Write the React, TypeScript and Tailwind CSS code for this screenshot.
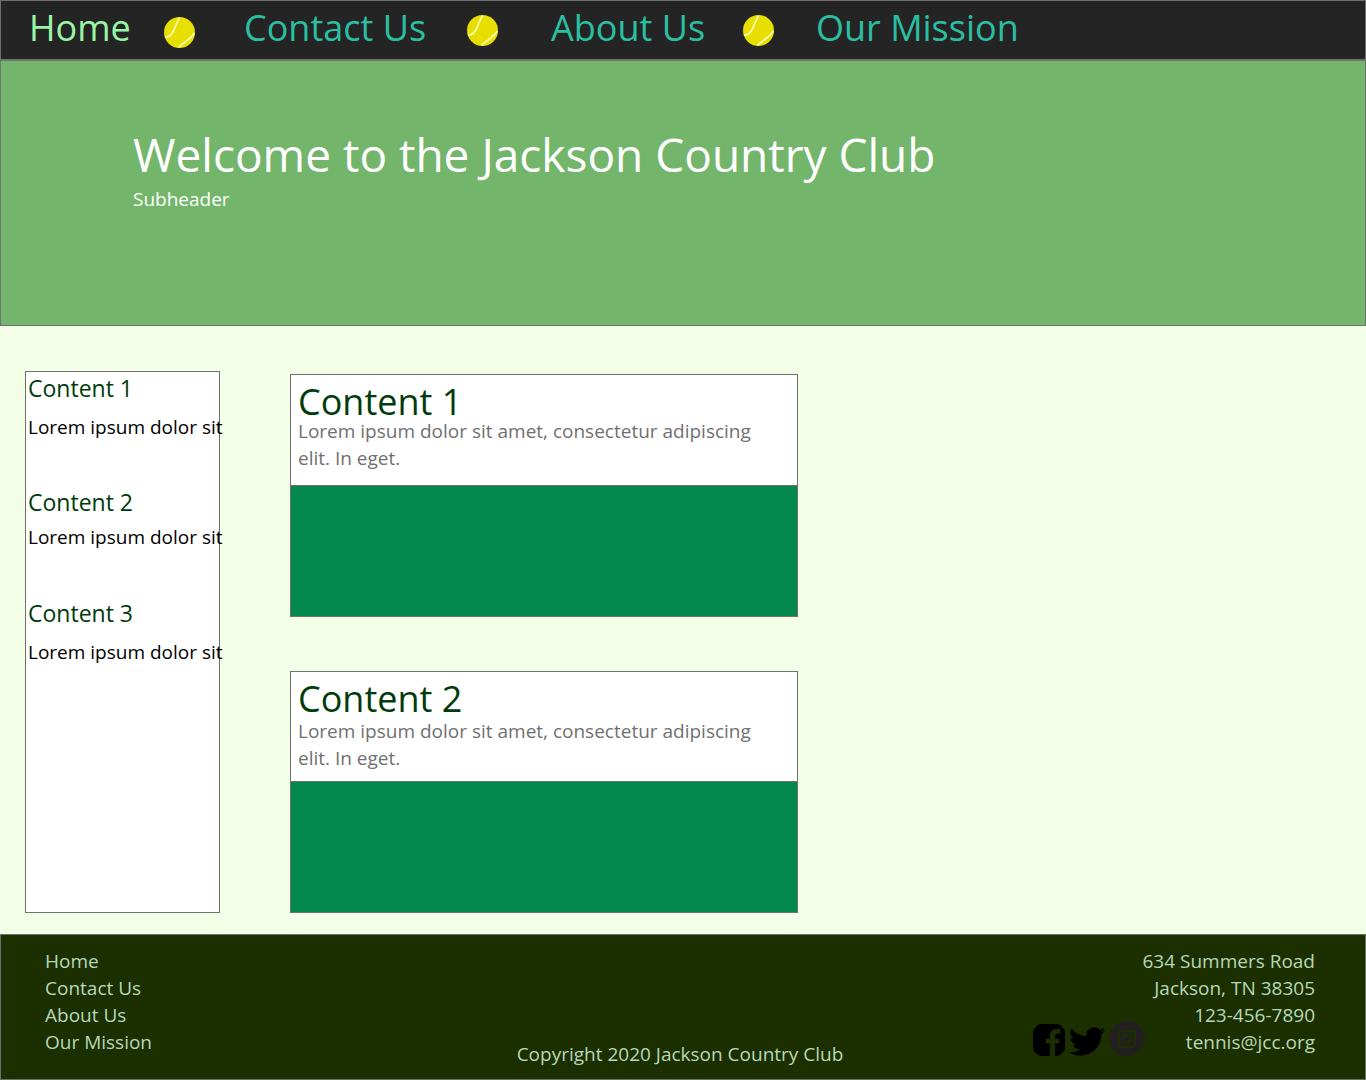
import React from "react";

function TennisBall({ className = "" }: { className?: string }) {
  return (
    <svg viewBox="0 0 31 31" className={`size-[31px] ${className}`} aria-hidden="true">
      <circle cx="15.5" cy="15.5" r="15.5" fill="#e6df00" />
      <path d="M15.6 .8C12.5 5 11.7 10.500 8.500 15.500C6.500 19 4 20.500 1 19.800" fill="none" stroke="#fbf8b0" strokeWidth="1.700" />
      <path d="M14.500 30.300C19 25.500 27 22.500 30.300 16" fill="none" stroke="#fbf8b0" strokeWidth="1.700" />
    </svg>
  );
}

function FacebookIcon() {
  return (
    <svg viewBox="0 0 32 32" className="size-8" aria-hidden="true">
      <path
        fill="#000"
        d="M8 0H24Q27 0 29 3Q32 5 32 8V24Q32 27 29 29Q27 32 24 32H22V19.500H26V15H22V12Q22 9.500 24.500 9.500H27V5H23Q17 5 17 11.500V15H13V19.500H17V32H8Q5 32 3 29Q0 27 0 24V8Q0 5 3 3Q5 0 8 0Z"
      />
    </svg>
  );
}

function TwitterIcon() {
  return (
    <svg viewBox="0 2 24 20" preserveAspectRatio="none" className="h-[29px] w-9" aria-hidden="true">
      <path
        fill="#000"
        d="M23.953 4.570a10 10 0 01-2.825.775 4.958 4.958 0 002.163-2.723c-.951.555-2.005.959-3.127 1.184a4.920 4.920 0 00-8.384 4.482C7.690 8.095 4.067 6.130 1.640 3.162a4.822 4.822 0 00-.666 2.475c0 1.710.870 3.213 2.188 4.096a4.904 4.904 0 01-2.228-.616v.060a4.923 4.923 0 003.946 4.827 4.996 4.996 0 01-2.212.085 4.936 4.936 0 004.604 3.417 9.867 9.867 0 01-6.102 2.105c-.390 0-.779-.023-1.170-.067a13.995 13.995 0 007.557 2.209c9.053 0 13.998-7.496 13.998-13.985 0-.210 0-.420-.015-.630A9.935 9.935 0 0024 4.590z"
      />
    </svg>
  );
}

function InstagramIcon() {
  return (
    <svg viewBox="0 0 36 36" className="size-9" aria-hidden="true">
      <circle cx="18" cy="18.500" r="17.500" fill="#231f20" />
      <rect x="10" y="11" width="16" height="16" rx="1.500" fill="none" stroke="#1b2f00" strokeWidth="2" />
      <circle cx="18" cy="19" r="4" fill="none" stroke="#1b2f00" strokeWidth="2.200" />
      <path d="M10 18H13.500M22.500 18H26" stroke="#1b2f00" strokeWidth="1.200" />
      <rect x="21.500" y="12.500" width="3" height="3" fill="#1b2f00" />
    </svg>
  );
}

const sidebar = [
  { title: "Content 1", row: "h-[114px]", gap: "pt-2.5" },
  { title: "Content 2", row: "h-[111px]", gap: "pt-1.5" },
  { title: "Content 3", row: "", gap: "pt-2.5" },
];

const cards = [
  { title: "Content 1", head: "h-[111px] pt-[11px]", heading: "leading-[32px]" },
  { title: "Content 2", head: "h-[110px] pt-2", heading: "leading-[38px]" },
];

export default function App() {
  return (
    <div className="flex min-h-screen flex-col bg-[#f2ffe6] font-['Open_Sans',sans-serif] text-[19px] leading-[27px]">
      <header className="border border-[#707070] bg-[#242424]">
        <nav aria-label="Main" className="grid h-[58px] grid-cols-[135px_80px_223px_84px_192px_73px_auto] pl-7 text-4xl leading-[54px] whitespace-nowrap text-[#2bbfa2]">
          <a href="#home" className="text-[#98f5a4]">Home</a>
          <TennisBall className="mt-4" />
          <a href="#contact">Contact Us</a>
          <TennisBall className="mt-3.5" />
          <a href="#about">About Us</a>
          <TennisBall className="mt-3.5" />
          <a href="#mission">Our Mission</a>
        </nav>
      </header>

      <section className="h-[266px] border border-[#707070] bg-[#73b66b] pt-[62px] pl-[132px] text-white">
        <h1 className="text-[46px] leading-[63px]">Welcome to the Jackson Country Club</h1>
        <p>Subheader</p>
      </section>

      <main className="flex flex-1 gap-[70px] px-[25px] pt-[45px] pb-[21px]">
        <aside className="w-[195px] shrink-0 border border-[#707070] bg-white pl-0.5 whitespace-nowrap">
          {sidebar.map((item) => (
            <section key={item.title} className={item.row}>
              <h2 className="text-[23px] leading-8 text-[#003b0b]">{item.title}</h2>
              <p className={`text-black ${item.gap}`}>Lorem ipsum dolor sit</p>
            </section>
          ))}
        </aside>
        <div className="flex max-w-[508px] flex-1 flex-col justify-between pt-[3px]">
          {cards.map((card) => (
            <article key={card.title} className="border border-[#707070] bg-white">
              <div className={`border-b border-[#707070] px-[7px] ${card.head}`}>
                <h2 className={`text-4xl text-[#003b0b] ${card.heading}`}>{card.title}</h2>
                <p className="max-w-[470px] text-[#707070]">
                  Lorem ipsum dolor sit amet, consectetur adipiscing elit. In eget.
                </p>
              </div>
              <div className="h-[130px] bg-[#02894b]" />
            </article>
          ))}
        </div>
      </main>

      <footer className="grid min-h-[146px] grid-cols-[1fr_auto_1fr] border border-[#707070] bg-[#1b2f00] pt-[13px] pr-[50px] pb-[11px] pl-11 text-[#b7d8b8]">
        <nav aria-label="Footer" className="flex flex-col items-start">
          <a href="#home">Home</a>
          <a href="#contact">Contact Us</a>
          <a href="#about">About Us</a>
          <a href="#mission">Our Mission</a>
        </nav>
        <p className="self-end">Copyright 2020 Jackson Country Club</p>
        <div className="flex justify-end">
          <div className="-mr-[3px] mb-3 flex items-end gap-1">
            <a href="#facebook" aria-label="Facebook"><FacebookIcon /></a>
            <a href="#twitter" aria-label="Twitter"><TwitterIcon /></a>
            <a href="#instagram" aria-label="Instagram"><InstagramIcon /></a>
          </div>
          <address className="text-right not-italic">
            634 Summers Road
            <br />
            Jackson, TN 38305
            <br />
            123-456-7890
            <br />
            <a href="mailto:tennis@jcc.org">tennis@jcc.org</a>
          </address>
        </div>
      </footer>
    </div>
  );
}
